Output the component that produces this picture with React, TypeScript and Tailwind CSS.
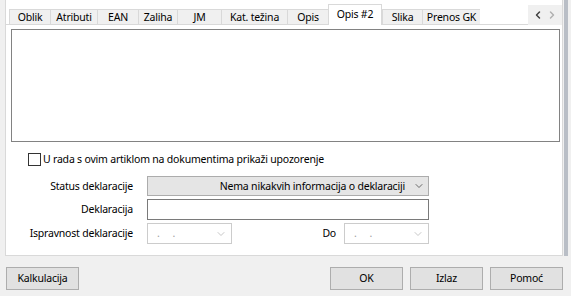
import { ChevronDown, ChevronLeft, ChevronRight } from "lucide-react";

const tabs = [
  { label: "Oblik", w: "w-[41px]" },
  { label: "Atributi", w: "w-[47px]" },
  { label: "EAN", w: "w-[41px]" },
  { label: "Zaliha", w: "w-[39px]" },
  { label: "JM", w: "w-[44px]" },
  { label: "Kat. težina", w: "w-[66px]" },
  { label: "Opis", w: "w-[41px]" },
  { label: "Opis #2", w: "w-[54px]", active: true },
  { label: "Slika", w: "w-[40px]" },
  { label: "Prenos GK", w: "w-[58px]" },
];

function DatePick() {
  return (
    <div className="w-[85px] h-[21px] border border-[#cccccc] bg-white flex items-center pl-[9px] pr-[4px] text-[#a0a0a0]">
      <span className="tracking-[5px]">. .</span>
      <ChevronDown className="ml-auto w-[12px] h-[12px] text-[#b4b4b4]" strokeWidth={1.5} />
    </div>
  );
}

function Btn({ label }: { label: string }) {
  return (
    <button className="w-[73px] h-[23px] bg-[#e1e1e1] border border-[#adadad] text-black flex items-center justify-center">
      {label}
    </button>
  );
}

export default function App() {
  return (
    <div className="w-[571px] h-[296px] bg-[#f0f0f0] overflow-hidden text-[10.5px] tracking-[-0.2px] text-black font-['Noto_Sans',sans-serif] leading-none whitespace-nowrap">
      <div className="flex h-[256px]">
        <div className="w-[5px]" />
        {/* ── Tab panel ── */}
        <div className="w-[558px] h-full bg-white border-l border-r border-b border-[#d9d9d9] flex flex-col">
          <div className="h-[25px] flex items-end pl-[3px] border-b border-[#d9d9d9]">
            {tabs.map((t) =>
              t.active ? (
                <div
                  key={t.label}
                  className={`${t.w} h-[21px] -mb-px bg-white border border-b-0 border-[#d9d9d9] flex items-start justify-center pt-[4px] relative z-10`}
                >
                  {t.label}
                </div>
              ) : (
                <div
                  key={t.label}
                  className={`${t.w} h-[15px] bg-[#f0f0f0] border border-b-0 border-r-0 border-[#d9d9d9] flex items-center justify-center`}
                >
                  {t.label}
                </div>
              )
            )}
            <div className="ml-auto w-[34px] h-[20px] -mb-px bg-[#f0f0f0] flex items-center justify-between px-[4px] relative z-10">
              <ChevronLeft className="w-[12px] h-[12px] text-[#404040]" strokeWidth={3} />
              <ChevronRight className="w-[12px] h-[12px] text-[#b0b0b0]" strokeWidth={3} />
            </div>
          </div>

          <div className="ml-[5px] mt-[4px] w-[549px] h-[113px] border border-[#828282] bg-white" />

          <div className="mt-[11px] ml-[22px] flex items-center gap-[2px]">
            <div className="w-[13px] h-[13px] border border-[#333333] bg-white" />
            <span>U rada s ovim artiklom na dokumentima prikaži upozorenje</span>
          </div>

          <div className="mt-[10px] grid grid-cols-[127px_1fr] gap-x-[14px] gap-y-[3px] items-center">
            <span className="text-right">Status deklaracije</span>
            <div className="w-[282px] h-[20px] bg-[#e5e5e5] border border-[#acacac] flex items-center pr-[3px]">
              <span className="ml-auto mr-[8px]">Nema nikakvih informacija o deklaraciji</span>
              <ChevronDown className="w-[12px] h-[12px] text-[#404040]" strokeWidth={1.5} />
            </div>
            <span className="text-right">Deklaracija</span>
            <div className="w-[282px] h-[21px] border border-[#7a7a7a] bg-white" />
            <span className="text-right">Ispravnost deklaracije</span>
            <div className="flex items-center">
              <DatePick />
              <span className="w-[112px] text-right pr-[8px]">Do</span>
              <DatePick />
            </div>
          </div>
        </div>
        <div className="w-[4px] bg-[#b9bec6] ml-[1px]" />
      </div>

      {/* ── Buttons ── */}
      <div className="mt-[11px] flex items-center pl-[6px]">
        <Btn label="Kalkulacija" />
        <div className="ml-auto flex gap-[7px] pr-[8px]">
          <Btn label="OK" />
          <Btn label="Izlaz" />
          <Btn label="Pomoć" />
        </div>
      </div>
    </div>
  );
}
